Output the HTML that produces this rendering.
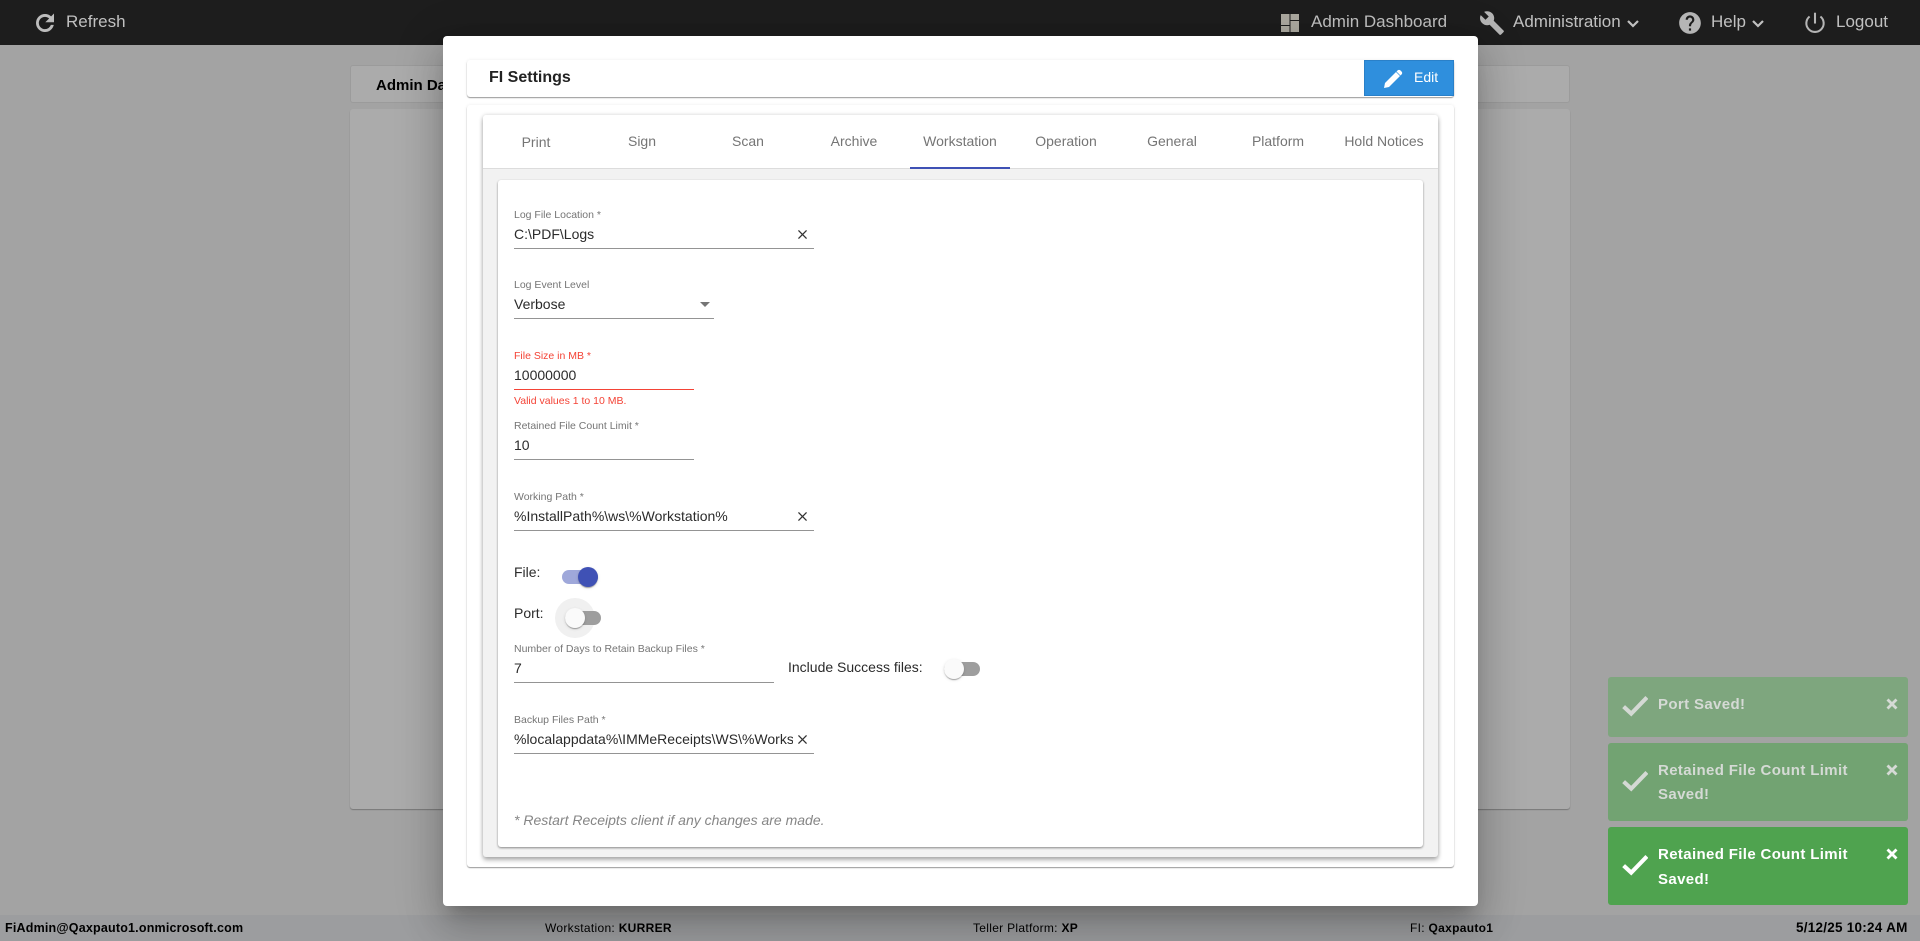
<!DOCTYPE html>
<html><head><meta charset="utf-8"><title>FI Settings</title>
<style>
html,body{margin:0;padding:0;width:1920px;height:941px;overflow:hidden;background:#a3a3a3;font-family:"Liberation Sans",sans-serif;}
div,span,svg{position:absolute;box-sizing:border-box;}
.t{white-space:nowrap;line-height:20px;height:20px;}
.nav{color:#c0c0c0;font-size:17px;top:12px}
.tab{color:#757575;font-size:14px;top:131px;width:106px;text-align:center}
.lb{color:#757575;font-size:10.5px;left:514px}
.v{color:#2b2b2b;font-size:14px;left:514px}
.ln{background:#949494;height:1px;left:514px}
.sb{color:#000;font-size:12px;top:918px;letter-spacing:.3px}
.toast{left:1608px;width:300px;border-radius:3px;}
.tt{color:#fff;font-weight:bold;font-size:15px;left:1658px;letter-spacing:.36px}
.thumb{border-radius:50%;width:20px;height:20px;box-shadow:0 2px 1px -1px rgba(0,0,0,.2),0 1px 1px rgba(0,0,0,.14),0 1px 3px rgba(0,0,0,.12)}
.track{width:36px;height:14px;border-radius:7px}
</style></head>
<body>
<!-- top bar -->
<div style="left:0;top:0;width:1920px;height:45px;background:#1d1d1d"></div>
<svg style="left:32px;top:10px" width="26" height="26" viewBox="0 0 24 24" fill="#bdbdbd" stroke="#bdbdbd" stroke-width=".6"><path d="M17.65 6.35A7.958 7.958 0 0 0 12 4c-4.42 0-7.99 3.58-7.99 8s3.57 8 7.99 8c3.73 0 6.84-2.55 7.73-6h-2.08A5.99 5.99 0 0 1 12 18c-3.31 0-6-2.69-6-6s2.69-6 6-6c1.66 0 3.14.69 4.22 1.78L13 11h7V4l-2.35 2.35z"/></svg>
<div class="t nav" style="left:66px">Refresh</div>
<svg style="left:1278px;top:11px" width="24" height="24" viewBox="0 0 24 24" fill="#aca9a0"><path d="M3 14h8.5V3H3zM3 21h8.5v-6H3zM12.5 21H21V10h-8.5zM12.5 3v6H21V3z"/></svg>
<div class="t nav" style="left:1311px">Admin Dashboard</div>
<svg style="left:1479px;top:10px" width="26" height="26" viewBox="0 0 24 24" fill="#b5b5b5"><path d="M22.7 19l-9.1-9.1c.9-2.3.4-5-1.5-6.9-2-2-5-2.4-7.4-1.3L9 6 6 9 1.6 4.7C.4 7.1.9 10.1 2.9 12.1c1.9 1.9 4.6 2.4 6.9 1.5l9.1 9.1c.4.4 1 .4 1.4 0l2.3-2.3c.5-.4.5-1.1.1-1.4z"/></svg>
<div class="t nav" style="left:1513px">Administration</div>
<svg style="left:1626px;top:19px" width="14" height="10" viewBox="0 0 14 10" fill="none" stroke="#c0c0c0" stroke-width="2.2"><path d="M2 2l5 5 5-5"/></svg>
<svg style="left:1677px;top:10px" width="26" height="26" viewBox="0 0 24 24" fill="#b5b5b5"><path d="M12 2C6.48 2 2 6.48 2 12s4.48 10 10 10 10-4.48 10-10S17.52 2 12 2zm1 17h-2v-2h2v2zm2.07-7.75l-.9.92C13.45 12.9 13 13.5 13 15h-2v-.5c0-1.1.45-2.1 1.17-2.83l1.24-1.26c.37-.36.59-.86.59-1.41 0-1.1-.9-2-2-2s-2 .9-2 2H8c0-2.21 1.79-4 4-4s4 1.79 4 4c0 .88-.36 1.68-.93 2.25z"/></svg>
<div class="t nav" style="left:1711px">Help</div>
<svg style="left:1751px;top:19px" width="14" height="10" viewBox="0 0 14 10" fill="none" stroke="#c0c0c0" stroke-width="2.2"><path d="M2 2l5 5 5-5"/></svg>
<svg style="left:1802px;top:10px" width="26" height="26" viewBox="0 0 24 24" fill="none" stroke="#b5b5b5" stroke-width="1.9"><path d="M12 2.5v10"/><path d="M7 6a8 8 0 1 0 10 0"/></svg>
<div class="t nav" style="left:1836px">Logout</div>

<!-- background page -->
<div style="left:350px;top:65px;width:1220px;height:38px;background:#ababab;border:1px solid #9b9b9b;border-radius:3px"></div>
<div class="t" style="left:376px;top:76px;font-size:15px;font-weight:bold;color:#000">Admin Dashboard</div>
<div style="left:350px;top:109px;width:1220px;height:700px;background:#ababab;border-radius:3px;box-shadow:0 1px 1px #777"></div>

<!-- status bar -->
<div style="left:0;top:915px;width:1920px;height:26px;background:#9c9d9f"></div>
<div class="t sb" style="left:5px;font-weight:bold;font-size:12.5px;letter-spacing:.2px">FiAdmin@Qaxpauto1.onmicrosoft.com</div>
<div class="t sb" style="left:545px">Workstation: <b>KURRER</b></div>
<div class="t sb" style="left:973px">Teller Platform: <b>XP</b></div>
<div class="t sb" style="left:1410px">FI: <b>Qaxpauto1</b></div>
<div class="t sb" style="left:1796px;font-weight:bold;font-size:13.5px;letter-spacing:.25px">5/12/25 10:24 AM</div>

<!-- toasts -->
<div class="toast" style="top:677px;height:60px;background:#7ea67e"></div>
<div class="toast" style="top:743px;height:78px;background:#72a372"></div>
<div class="toast" style="top:827px;height:78px;background:#4fa34f"></div>
<svg style="left:1622px;top:692px" width="26" height="26" viewBox="0 0 24 24" fill="none" stroke="#d4d9d4" stroke-width="3.8"><path d="M1.5 13.5l7 6.5L23 5"/></svg>
<svg style="left:1622px;top:767px" width="26" height="26" viewBox="0 0 24 24" fill="none" stroke="#d4d9d4" stroke-width="3.8"><path d="M1.5 13.5l7 6.5L23 5"/></svg>
<svg style="left:1622px;top:851px" width="26" height="26" viewBox="0 0 24 24" fill="none" stroke="#fff" stroke-width="3.8"><path d="M1.5 13.5l7 6.5L23 5"/></svg>
<div class="t tt" style="top:695px;color:#d5dad5">Port Saved!</div>
<div class="t tt" style="top:761px;color:#d5dad5">Retained File Count Limit</div>
<div class="t tt" style="top:785px;color:#d5dad5">Saved!</div>
<div class="t tt" style="top:845px">Retained File Count Limit</div>
<div class="t tt" style="top:870px">Saved!</div>
<svg style="left:1886px;top:698px" width="12" height="12" viewBox="0 0 12 12" stroke="#d5dad5" stroke-width="2.8"><path d="M1.5 1.5l9 9M10.5 1.5l-9 9"/></svg>
<svg style="left:1886px;top:764px" width="12" height="12" viewBox="0 0 12 12" stroke="#d5dad5" stroke-width="2.8"><path d="M1.5 1.5l9 9M10.5 1.5l-9 9"/></svg>
<svg style="left:1886px;top:848px" width="12" height="12" viewBox="0 0 12 12" stroke="#fff" stroke-width="2.8"><path d="M1.5 1.5l9 9M10.5 1.5l-9 9"/></svg>

<!-- modal -->
<div style="left:443px;top:36px;width:1035px;height:870px;background:#fff;border-radius:4px;box-shadow:0 11px 15px -7px rgba(0,0,0,.2),0 24px 38px 3px rgba(0,0,0,.14),0 9px 46px 8px rgba(0,0,0,.12)"></div>

<!-- header card -->
<div style="left:467px;top:60px;width:987px;height:37px;background:#fff;border-radius:3px;box-shadow:0 1px 1px #9a9a9a,0 0 3px rgba(0,0,0,.08)"></div>
<div class="t" style="left:489px;top:68px;font-size:16px;font-weight:bold;color:#222">FI Settings</div>
<div style="left:1364px;top:60px;width:90px;height:36px;background:#2f8fdd;border:1px solid #2a80c8"></div>
<svg style="left:1381px;top:67px" width="24" height="24" viewBox="0 0 24 24" fill="#fff"><path d="M3 21l1-5L15 5l4 4L8 20zM16.5 3.5a2 2 0 0 1 3 0l1 1a2 2 0 0 1 0 3l-1 1-4-4z"/></svg>
<div class="t" style="left:1414px;top:67px;font-size:14px;color:#fff">Edit</div>

<!-- outer card -->
<div style="left:467px;top:105px;width:987px;height:762px;background:#fff;border-radius:3px;box-shadow:0 1px 1px #9a9a9a,0 0 3px rgba(0,0,0,.08)"></div>
<!-- tab card -->
<div style="left:483px;top:115px;width:955px;height:742px;background:#f2f2f2;border-radius:3px;box-shadow:0 3px 5px rgba(0,0,0,.3),0 0 4px rgba(0,0,0,.15)"></div>
<div style="left:483px;top:115px;width:955px;height:54px;background:#fff;border-bottom:1px solid #dcdcdc;border-radius:3px 3px 0 0"></div>
<div class="t tab" style="left:483px;top:132px">Print</div>
<div class="t tab" style="left:589px">Sign</div>
<div class="t tab" style="left:695px">Scan</div>
<div class="t tab" style="left:801px">Archive</div>
<div class="t tab" style="left:906px;width:108px">Workstation</div>
<div class="t tab" style="left:1013px">Operation</div>
<div class="t tab" style="left:1119px">General</div>
<div class="t tab" style="left:1225px">Platform</div>
<div class="t tab" style="left:1331px">Hold Notices</div>
<div style="left:910px;top:167px;width:100px;height:2px;background:#3f51b5"></div>

<!-- form card -->
<div style="left:498px;top:180px;width:925px;height:667px;background:#fff;border-radius:3px;box-shadow:0 1px 2px rgba(0,0,0,.45)"></div>

<div class="t lb" style="top:205px">Log File Location *</div>
<div class="t v" style="top:224px">C:\PDF\Logs</div>
<div class="ln" style="top:248px;width:300px"></div>
<svg style="left:798px;top:230px" width="9" height="9" viewBox="5 5 14 14" fill="#333"><path d="M19 6.41L17.59 5 12 10.59 6.41 5 5 6.41 10.59 12 5 17.59 6.41 19 12 13.41 17.59 19 19 17.59 13.41 12z"/></svg>

<div class="t lb" style="top:275px">Log Event Level</div>
<div class="t v" style="top:294px">Verbose</div>
<div class="ln" style="top:318px;width:200px"></div>
<svg style="left:700px;top:302px" width="10" height="6" viewBox="0 0 10 6" fill="#757575"><path d="M0 0h10L5 5z"/></svg>

<div class="t lb" style="top:346px;color:#f44336">File Size in MB *</div>
<div class="t v" style="top:365px">10000000</div>
<div class="ln" style="top:389px;width:180px;background:#f44336"></div>
<div class="t lb" style="top:391px;color:#f44336">Valid values 1 to 10 MB.</div>

<div class="t lb" style="top:416px">Retained File Count Limit *</div>
<div class="t v" style="top:435px">10</div>
<div class="ln" style="top:459px;width:180px"></div>

<div class="t lb" style="top:487px">Working Path *</div>
<div class="t v" style="top:506px">%InstallPath%\ws\%Workstation%</div>
<div class="ln" style="top:530px;width:300px"></div>
<svg style="left:798px;top:512px" width="9" height="9" viewBox="5 5 14 14" fill="#333"><path d="M19 6.41L17.59 5 12 10.59 6.41 5 5 6.41 10.59 12 5 17.59 6.41 19 12 13.41 17.59 19 19 17.59 13.41 12z"/></svg>

<div class="t v" style="top:562px">File:</div>
<div class="track" style="left:562px;top:570px;background:#9fa8da"></div>
<div class="thumb" style="left:578px;top:567px;background:#3f51b5"></div>

<div class="t v" style="top:603px">Port:</div>
<div style="left:555px;top:598px;width:40px;height:40px;border-radius:50%;background:#f0f0f0"></div>
<div class="track" style="left:565px;top:611px;background:#9e9e9e"></div>
<div class="thumb" style="left:565px;top:608px;background:#fafafa"></div>

<div class="t lb" style="top:639px">Number of Days to Retain Backup Files *</div>
<div class="t v" style="top:658px">7</div>
<div class="ln" style="top:682px;width:260px"></div>
<div class="t v" style="left:788px;top:657px">Include Success files:</div>
<div class="track" style="left:944px;top:662px;background:#9e9e9e"></div>
<div class="thumb" style="left:944px;top:659px;background:#fafafa"></div>

<div class="t lb" style="top:710px">Backup Files Path *</div>
<div class="t v" style="top:729px;width:279px;overflow:hidden">%localappdata%\IMMeReceipts\WS\%Workstation%</div>
<div class="ln" style="top:753px;width:300px"></div>
<svg style="left:798px;top:735px" width="9" height="9" viewBox="5 5 14 14" fill="#333"><path d="M19 6.41L17.59 5 12 10.59 6.41 5 5 6.41 10.59 12 5 17.59 6.41 19 12 13.41 17.59 19 19 17.59 13.41 12z"/></svg>

<div class="t" style="left:514px;top:810px;font-size:14px;font-style:italic;color:#858585">* Restart Receipts client if any changes are made.</div>
</body></html>
